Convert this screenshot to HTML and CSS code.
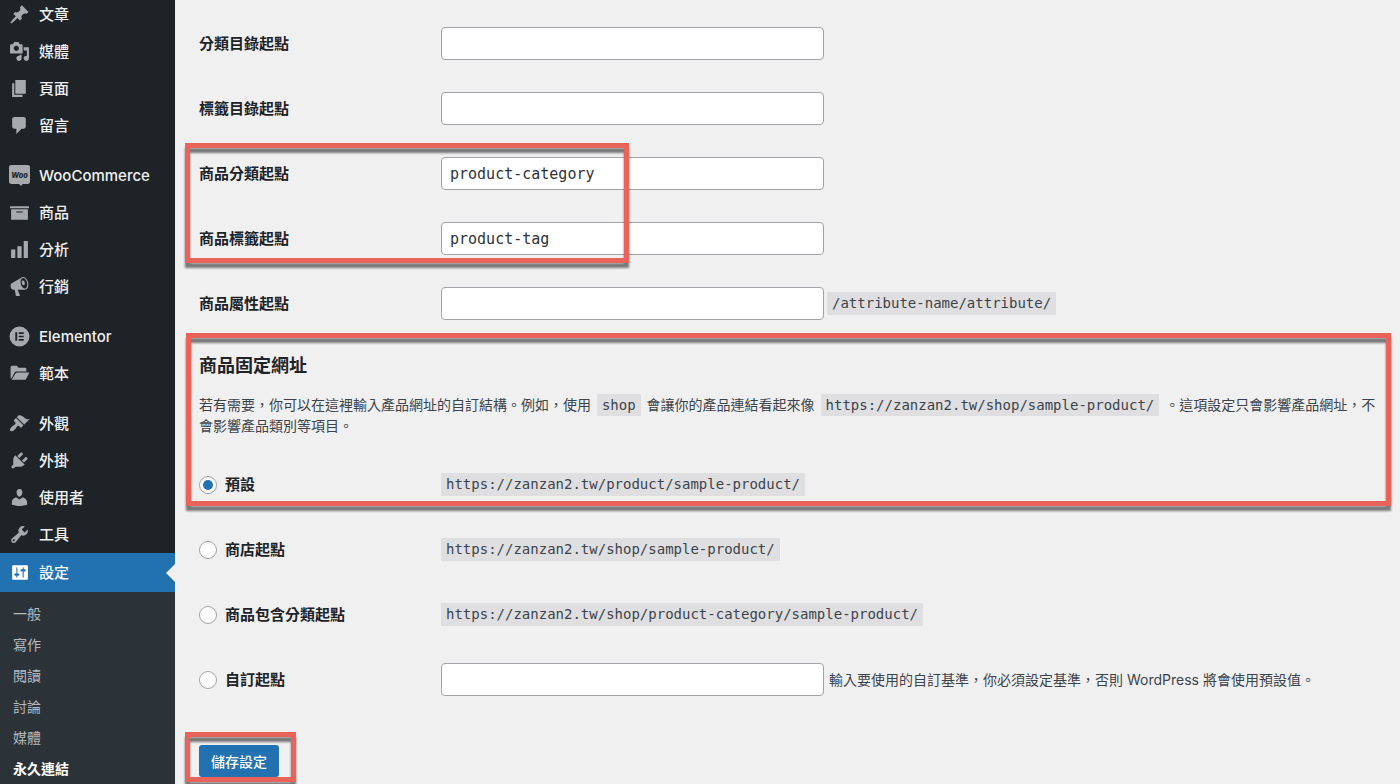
FILE: index.html
```html
<!DOCTYPE html>
<html lang="zh-Hant">
<head>
<meta charset="utf-8">
<meta name="viewport" content="width=device-width, initial-scale=1">
<title>永久連結設定</title>
<link rel="stylesheet" href="styles.css">
</head>
<body>
<div class="layout">
  <nav class="sidebar" aria-label="主選單">
    <ul class="menu">
      <li><a class="menu-link" href="#"><svg class="icon" viewBox="0 0 20 20"><path d="M10.44 3.02l1.82-1.82 6.36 6.35-1.83 1.82c-1.05-.68-2.48-.57-3.41.36l-.75.75c-.92.93-1.04 2.35-.35 3.41l-1.83 1.82-2.41-2.41-2.8 2.79c-.42.42-3.38 2.71-3.8 2.29s1.86-3.39 2.28-3.81l2.79-2.79L4.1 9.36l1.83-1.82c1.05.69 2.48.57 3.4-.36l.75-.75c.93-.92 1.05-2.35.36-3.41z"/></svg>文章</a></li>
      <li><a class="menu-link" href="#"><svg class="icon" viewBox="0 0 20 20"><path d="M13 11V4c0-.55-.45-1-1-1h-1.67L9 1H5L3.67 3H2c-.55 0-1 .45-1 1v7c0 .55.45 1 1 1h10c.55 0 1-.45 1-1zM7 4.5c1.38 0 2.5 1.12 2.5 2.5S8.38 9.5 7 9.5 4.5 8.38 4.5 7 5.62 4.5 7 4.5zM14 6h5v10.5c0 1.38-1.12 2.5-2.5 2.5S14 17.88 14 16.5s1.12-2.5 2.5-2.5c.17 0 .34.02.5.05V9h-3V6zm-4 8.05V13h2v3.5c0 1.38-1.12 2.5-2.5 2.5S7 17.88 7 16.5 8.12 14 9.5 14c.17 0 .34.02.5.05z"/></svg>媒體</a></li>
      <li><a class="menu-link" href="#"><svg class="icon" viewBox="0 0 20 20"><path d="M6 15V2h10v13H6zm-1 1h8v2H3V5h2v11z"/></svg>頁面</a></li>
      <li><a class="menu-link" href="#"><svg class="icon" viewBox="0 0 20 20"><path d="M5 2h9c1.1 0 2 .9 2 2v7c0 1.1-.9 2-2 2h-2l-5 5v-5H5c-1.1 0-2-.9-2-2V4c0-1.1.9-2 2-2z"/></svg>留言</a></li>
    </ul>
    <ul class="menu">
      <li><a class="menu-link" href="#"><svg class="icon" viewBox="0 0 20 20"><path d="M2 0h16q2 0 2 2v14q0 2-2 2h-5l-1.500 2-2-2H2q-2 0-2-2V2q0-2 2-2z"/><text class="woo-mark" x="10" y="12" text-anchor="middle">Woo</text></svg>WooCommerce</a></li>
      <li><a class="menu-link" href="#"><svg class="icon" viewBox="0 0 20 20"><path d="M19 4v2H1V4h18zM2 7h16v10H2V7zm11 3V9H7v1h6z"/></svg>商品</a></li>
      <li><a class="menu-link" href="#"><svg class="icon" viewBox="0 0 20 20"><path d="M18 18V2h-4v16h4zm-6 0V7H8v11h4zm-6 0v-8H2v8h4z"/></svg>分析</a></li>
      <li><a class="menu-link" href="#"><svg class="icon" viewBox="0 0 20 20"><path d="M18.150 5.940c.46 1.620.38 3.220-.02 4.480-.42 1.280-1.260 2.180-2.300 2.480-.16.06-.26.06-.4.06-.06.02-.12.02-.18.02-.06.02-.14.02-.22.02h-6.800l2.220 5.500c.02.14-.06.26-.14.34-.08.1-.24.16-.34.16H6.950c-.1 0-.26-.06-.34-.16-.08-.08-.16-.2-.14-.34l-1-5.500H4.250l-.02-.02c-.5.06-1.080-.18-1.540-.62s-.88-1.080-1.060-1.880c-.24-.8-.2-1.560-.02-2.200.18-.62.58-1.080 1.060-1.300l.02-.02 9-5.400c.1-.06.18-.1.24-.16.06-.04.14-.08.24-.12.16-.08.28-.12.5-.18 1.040-.3 2.240.1 3.220.98s1.840 2.240 2.260 3.860zm-2.580 5.980h-.02c.4-.1.74-.34 1.040-.7.58-.7.86-1.760.86-3.040 0-.64-.1-1.300-.28-1.980-.34-1.360-1.020-2.500-1.780-3.240s-1.680-1.100-2.460-.88c-.82.22-1.400.96-1.700 2-.32 1.040-.28 2.360.06 3.720.38 1.360 1 2.500 1.800 3.240.78.74 1.620 1.100 2.480.88zm-2.540-7.720c.22-.04.42-.02.62.04.38.16.76.48 1.020 1s.42 1.200.42 1.780c0 .3-.04.56-.12.8-.18.48-.44.84-.86.94-.34.1-.8-.06-1.140-.4s-.64-.86-.78-1.500c-.18-.62-.12-1.240.02-1.720s.48-.84.82-.94z"/></svg>行銷</a></li>
    </ul>
    <ul class="menu">
      <li><a class="menu-link" href="#"><svg class="icon" viewBox="0 0 20 20"><path fill-rule="evenodd" d="M10 .5a9.500 9.500 0 1 0 0 19 9.500 9.500 0 0 0 0-19zM6 6h1.800v8H6zM9.300 6H14v1.600H9.300zM9.300 9.200H14v1.600H9.300zM9.300 12.400H14V14H9.300z"/></svg>Elementor</a></li>
      <li><a class="menu-link" href="#"><svg class="icon" viewBox="0 0 20 20"><path d="M1.500 14.500V4q0-1.500 1.500-1.500h4.500L9 4.500h6.500q1 0 1 1V8H7.200q-1.200 0-1.900 1.100L2.500 14.500zM2.500 16l3.800-6.200q.5-.8 1.500-.8H19.500l-3.300 6.200q-.5.8-1.500.8z"/></svg>範本</a></li>
    </ul>
    <ul class="menu">
      <li><a class="menu-link" href="#"><svg class="icon" viewBox="0 0 20 20"><path d="M14.480 11.060L7.410 3.990l1.500-1.500c.5-.56 2.300-.47 3.510.32 1.210.8 1.430 1.280 2.910 2.100 1.180.64 2.450 1.260 4.450.85zm-.71.71L6.700 4.700 4.930 6.470c-.39.39-.39 1.020 0 1.410l1.060 1.060c.39.39.39 1.030 0 1.420-.6.6-1.430 1.110-2.210 1.690-.35.26-.7.53-1.010.84C1.430 14.230.4 16.080 1.400 17.070c.99 1 2.840-.03 4.180-1.360.31-.31.58-.66.85-1.020.57-.78 1.080-1.610 1.690-2.210.39-.39 1.020-.39 1.410 0l1.060 1.060c.39.39 1.020.39 1.410 0z"/></svg>外觀</a></li>
      <li><a class="menu-link" href="#"><svg class="icon" viewBox="0 0 20 20"><path d="M13.110 4.360L9.870 7.600 8 5.730l3.240-3.240c.35-.34 1.050-.2 1.560.32.52.51.66 1.210.31 1.550zm-8 1.770l.91-1.120 9.010 9.010-1.190.84c-.71.71-2.630 1.160-3.820 1.160H6.140L4.900 17.260c-.59.59-1.540.59-2.120 0-.59-.58-.59-1.530 0-2.120l1.240-1.240v-3.880c0-1.130.4-3.190 1.090-3.890zm7.260 3.970l3.240-3.240c.34-.35 1.040-.21 1.550.31.52.51.66 1.210.31 1.550l-3.240 3.250z"/></svg>外掛</a></li>
      <li><a class="menu-link" href="#"><svg class="icon" viewBox="0 0 20 20"><path d="M10 9.250c-2.270 0-2.730-3.440-2.730-3.440C7 4.020 7.820 2 9.970 2c2.160 0 2.980 2.020 2.710 3.810 0 0-.41 3.440-2.680 3.440zm0 2.570L12.720 10c2.390 0 4.520 2.330 4.520 4.530v2.490s-3.650 1.130-7.240 1.130c-3.650 0-7.240-1.130-7.240-1.130v-2.490c0-2.250 1.940-4.480 4.470-4.480z"/></svg>使用者</a></li>
      <li><a class="menu-link" href="#"><svg class="icon" viewBox="0 0 20 20"><path d="M16.680 9.770c-1.340 1.340-3.300 1.670-4.950.99l-5.410 6.520c-.99.99-2.590.99-3.580 0s-.99-2.590 0-3.570l6.520-5.420c-.68-1.650-.35-3.610.99-4.950 1.280-1.280 3.120-1.620 4.720-1.060l-2.890 2.890 2.820 2.820 2.860-2.870c.53 1.580.18 3.390-1.080 4.650zM3.810 16.210c.4.39 1.040.39 1.430 0 .4-.4.4-1.040 0-1.430-.39-.4-1.030-.4-1.430 0-.39.39-.39 1.030 0 1.430z"/></svg>工具</a></li>
      <li>
        <a class="menu-link menu-link-active" href="#"><svg class="icon" viewBox="0 0 20 20"><path d="M18 16V4c0-.55-.45-1-1-1H4c-.55 0-1 .45-1 1v12c0 .55.45 1 1 1h13c.55 0 1-.45 1-1zM8 11h1c.55 0 1 .45 1 1s-.45 1-1 1H8v1.500c0 .28-.22.5-.5.5s-.5-.22-.5-.5V13H6c-.55 0-1-.45-1-1s.45-1 1-1h1V5.500c0-.28.22-.5.5-.5s.5.22.5.5V11zm5-2h-1c-.55 0-1-.45-1-1s.45-1 1-1h1V5.500c0-.28.22-.5.5-.5s.5.22.5.5V7h1c.55 0 1 .45 1 1s-.45 1-1 1h-1v5.500c0 .28-.22.5-.5.5s-.5-.22-.5-.5V9z"/></svg>設定</a>
        <ul class="submenu">
          <li><a class="submenu-link" href="#">一般</a></li>
          <li><a class="submenu-link" href="#">寫作</a></li>
          <li><a class="submenu-link" href="#">閱讀</a></li>
          <li><a class="submenu-link" href="#">討論</a></li>
          <li><a class="submenu-link" href="#">媒體</a></li>
          <li><a class="submenu-link submenu-link-current" href="#" aria-current="page">永久連結</a></li>
        </ul>
      </li>
    </ul>
  </nav>

  <main class="content">
    <form class="settings">
      <div class="row">
        <label class="row-label" for="category-base">分類目錄起點</label>
        <input class="field" id="category-base" type="text">
      </div>
      <div class="row">
        <label class="row-label" for="tag-base">標籤目錄起點</label>
        <input class="field" id="tag-base" type="text">
      </div>
      <div class="callout callout-bases">
        <div class="row">
          <label class="row-label" for="product-category">商品分類起點</label>
          <input class="field" id="product-category" type="text" value="product-category">
        </div>
        <div class="row">
          <label class="row-label" for="product-tag">商品標籤起點</label>
          <input class="field" id="product-tag" type="text" value="product-tag">
        </div>
      </div>
      <div class="row">
        <label class="row-label" for="attribute-base">商品屬性起點</label>
        <input class="field" id="attribute-base" type="text">
        <code class="code field-suffix">/attribute-name/attribute/</code>
      </div>

      <section class="callout callout-permalinks">
        <h2 class="heading">商品固定網址</h2>
        <p class="description">若有需要，你可以在這裡輸入產品網址的自訂結構。例如，使用 <code class="code">shop</code> 會讓你的產品連結看起來像 <code class="code">https://zanzan2.tw/shop/sample-product/</code> 。這項設定只會影響產品網址，不會影響產品類別等項目。</p>
        <div class="row">
          <label class="row-label choice"><input class="radio" type="radio" name="permalink" checked>預設</label>
          <code class="code">https://zanzan2.tw/product/sample-product/</code>
        </div>
      </section>
      <div class="row">
        <label class="row-label choice"><input class="radio" type="radio" name="permalink">商店起點</label>
        <code class="code">https://zanzan2.tw/shop/sample-product/</code>
      </div>
      <div class="row">
        <label class="row-label choice"><input class="radio" type="radio" name="permalink">商品包含分類起點</label>
        <code class="code">https://zanzan2.tw/shop/product-category/sample-product/</code>
      </div>
      <div class="row">
        <label class="row-label choice"><input class="radio" type="radio" name="permalink">自訂起點</label>
        <input class="field" type="text" aria-label="自訂起點">
        <span class="hint">輸入要使用的自訂基準，你必須設定基準，否則 WordPress 將會使用預設值。</span>
      </div>
      <div class="callout callout-submit">
        <button class="save" type="button">儲存設定</button>
      </div>
    </form>
  </main>
</div>
</body>
</html>
```

FILE: styles.css
```css
html {
  scrollbar-width: none;
}

body {
  margin: 0;
  background: #f0f0f1;
  color: #3c434a;
  font: 14px/21px Inter, "Noto Sans CJK TC", sans-serif;
}

.layout {
  display: flex;
  align-items: stretch;
  min-height: 100vh;
}

/* Sidebar */

.sidebar {
  flex: 0 0 175px;
  margin-top: -4px;
  background: #1d2327;
}

.menu,
.submenu {
  margin: 0;
  padding: 0;
  list-style: none;
}

.menu + .menu {
  margin-top: 13px;
}

.menu-link {
  display: flex;
  align-items: center;
  gap: 9px;
  height: 37px;
  padding-left: 9px;
  color: #f0f0f1;
  font-size: 15px;
  font-weight: 500;
  text-decoration: none;
}

.icon {
  width: 21px;
  height: 21px;
  fill: #a7aaad;
}

.woo-mark {
  fill: #1d2327;
  font: italic 800 7px Inter, sans-serif;
}

.menu-link-active {
  position: relative;
  height: 39px;
  background: #2271b1;
  color: #fff;
}

.menu-link-active .icon {
  fill: #fff;
}

.menu-link-active::after {
  content: "";
  position: absolute;
  top: 50%;
  right: 0;
  margin-top: -9px;
  border: 9px solid transparent;
  border-left-width: 0;
  border-right-color: #f0f0f1;
}

.submenu {
  padding: 6px 0;
  background: #2c3338;
}

.submenu-link {
  display: block;
  padding-left: 13px;
  color: #b4b9be;
  font-size: 14px;
  line-height: 31px;
  text-decoration: none;
}

.submenu-link-current {
  color: #fff;
  font-weight: 700;
}

/* Settings form */

.content {
  flex: 1;
  min-width: 0;
  padding: 11px 14px 0 24px;
}

.row {
  display: flex;
  align-items: center;
  min-height: 65px;
}

.row-label {
  flex: 0 0 242px;
  color: #1d2327;
  font-size: 15px;
  font-weight: 700;
}

.choice {
  display: flex;
  align-items: center;
  gap: 8px;
}

.field {
  box-sizing: border-box;
  width: 383px;
  height: 33px;
  padding: 0 8px;
  border: 1px solid #a0a3a7;
  border-radius: 4px;
  background: #fff;
  color: #2c3338;
  font: 15px "DejaVu Sans Mono", monospace;
}

.radio {
  appearance: none;
  display: grid;
  place-items: center;
  box-sizing: border-box;
  width: 18px;
  height: 18px;
  margin: 0;
  border: 1px solid #a0a3a7;
  border-radius: 50%;
  background: #fff;
}

.radio:checked::before {
  content: "";
  width: 10px;
  height: 10px;
  border-radius: 50%;
  background: #2271b1;
}

.code {
  padding: 3px 5px;
  background: #dfdfe1;
  color: #3c434a;
  font: 14px/17px "DejaVu Sans Mono", monospace;
}

.field-suffix {
  margin-left: 3px;
}

.description .code {
  margin: 0 2px;
}

.hint {
  margin-left: 5px;
}

.heading {
  margin: 0;
  padding-top: 17px;
  color: #1d2327;
  font-size: 18px;
  line-height: 26px;
}

.description {
  margin: 15px 0 16px;
  padding-right: 6px;
}

.save {
  height: 32px;
  padding: 0 12px;
  border: 0;
  border-radius: 3px;
  background: #2271b1;
  color: #fff;
  font: 500 14px "Noto Sans CJK TC", sans-serif;
}

/* Red frames laid over the parts of the form they point out */

.callout {
  position: relative;
}

.callout::after {
  content: "";
  position: absolute;
  border: 5px solid #e9635a;
  filter: drop-shadow(0 5px 1px rgba(0, 0, 0, 0.5));
  pointer-events: none;
}

.callout-bases::after {
  inset: 2px auto 8px -14px;
  width: 434px;
}

.callout-permalinks::after {
  inset: -3px -5px 11px -13px;
}

.callout-submit {
  width: max-content;
  margin-top: 33px;
}

.callout-submit::after {
  inset: -13px -17px -5px -14px;
}
```
